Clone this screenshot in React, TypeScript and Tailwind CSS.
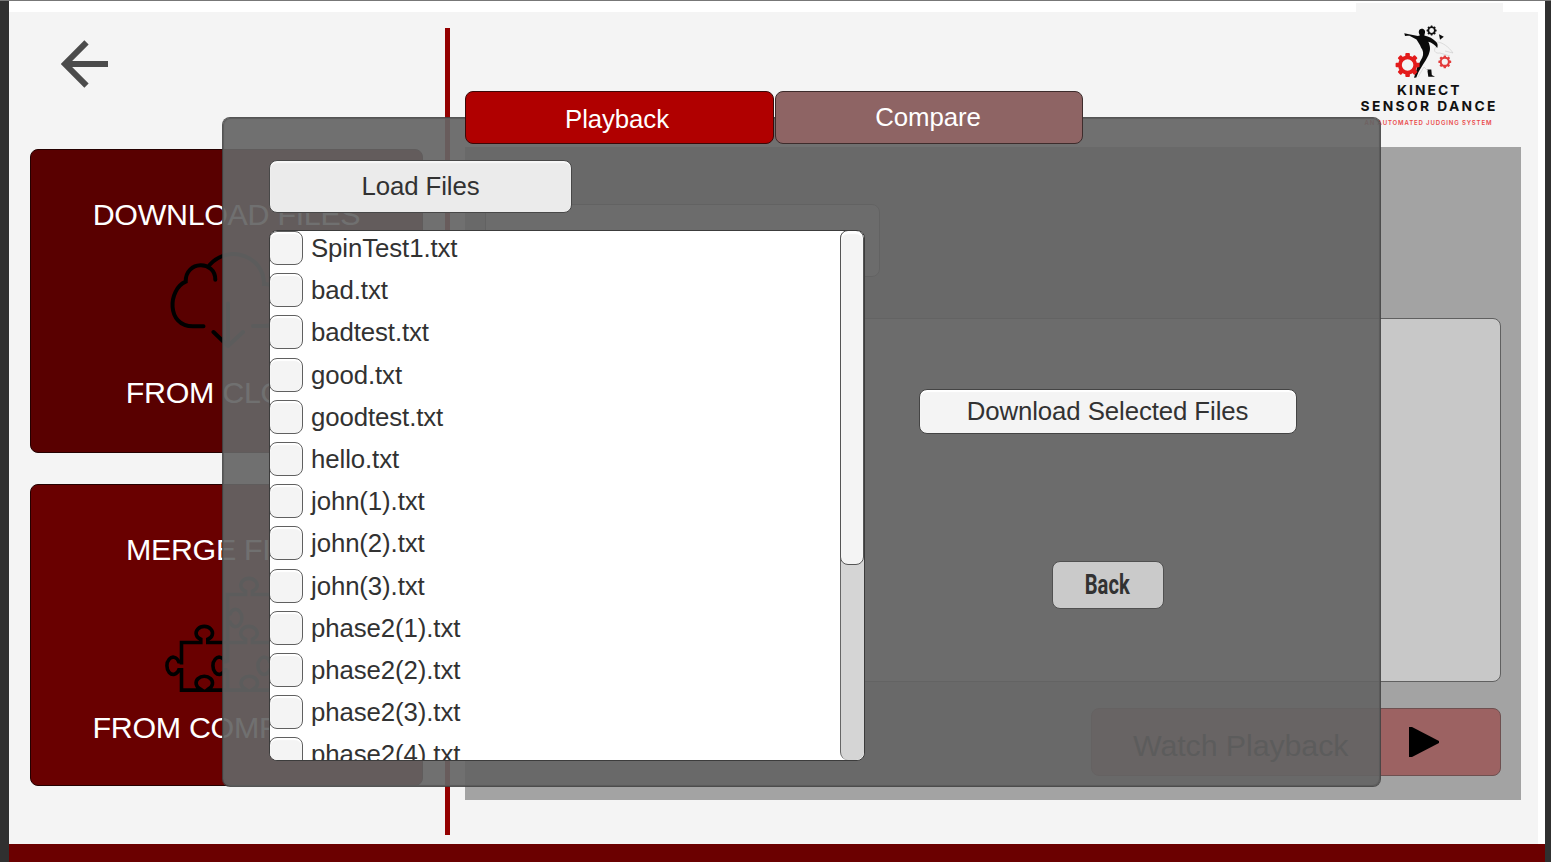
import React from "react";

const files = [
  "SpinTest1.txt",
  "bad.txt",
  "badtest.txt",
  "good.txt",
  "goodtest.txt",
  "hello.txt",
  "john(1).txt",
  "john(2).txt",
  "john(3).txt",
  "phase2(1).txt",
  "phase2(2).txt",
  "phase2(3).txt",
  "phase2(4).txt",
];

function Gear({ cx, cy, r, fill, teeth = 8 }: { cx: number; cy: number; r: number; fill: string; teeth?: number }) {
  const list = Array.from({ length: teeth }, (_, i) => (i * 360) / teeth);
  return (
    <g transform={`translate(${cx} ${cy})`} fill={fill}>
      <circle r={r * 0.64} fill="none" stroke={fill} strokeWidth={r * 0.32} />
      {list.map((a) => (
        <rect key={a} x={-r * 0.19} y={-r} width={r * 0.38} height={r * 0.36} rx={r * 0.08} transform={`rotate(${a})`} />
      ))}
    </g>
  );
}

function Logo() {
  return (
    <svg className="block h-[128px] w-[147px] bg-[#f4f4f4]" viewBox="1356 3 147 128">
      <path
        d="M1404.300 33.300L1409 34.200 1418 36 1420 35.200C1418 33 1418.500 29 1421.500 28.700 1424.500 28.500 1425.700 31 1424.800 33.500L1424.300 35.500C1429 36.500 1433 38.500 1436.300 42 1437.800 43.500 1438 45.500 1437.200 48 1435 44.800 1431.500 42.600 1428.300 41.800 1430.300 46 1430.800 50 1428.500 55 1427 58.500 1424.500 62 1423 64.500L1418.500 72 1416.300 77.500 1414 77.700 1417.500 66.500 1422.300 57.500C1423.800 54 1423.300 50.500 1421 47.500 1420 45 1418.500 42.500 1416.500 39.500L1409.500 35.700 1407.500 35.800 1405 36Z"
        fill="#0a0a0a"
      />
      <path d="M1427.300 69.500H1431.300L1431.800 75 1435 76.800H1428.300Z" fill="#0a0a0a" />
      <path d="M1439 34.200L1443.800 36.800 1440 39.800Z" fill="#0a0a0a" />
      <path d="M1436 47c-3 3-1 7 4 6l10 3M1437 42c5 0 12 5 16 11l-8-2M1418 77l6-10 4 4" fill="none" stroke="#c9c9c9" strokeWidth=".6" />
      <Gear cx={1431.600} cy={30.500} r={5} fill="#111111" />
      <Gear cx={1407.600} cy={65} r={12} fill="#e31b1b" />
      <Gear cx={1444.800} cy={61.800} r={6.400} fill="#e33c3c" />
      <g fontFamily="Inter, sans-serif">
        <text x="1397" y="94.500" fontSize="13.800" fontWeight="700" fill="#111" textLength="62.500">KINECT</text>
        <text x="1360.500" y="111.300" fontSize="13.800" fontWeight="700" fill="#111" textLength="135">SENSOR DANCE</text>
        <text x="1364.500" y="125" fontSize="6" fontWeight="600" fill="#ea4a4a" textLength="127">AN AUTOMATED JUDGING SYSTEM</text>
      </g>
    </svg>
  );
}

function CloudIcon() {
  return (
    <svg className="h-[100px] w-[116px]" viewBox="169 247.500 116 100" fill="none" stroke="#000" strokeWidth="4" strokeLinecap="round">
      <path d="M203.500 325.700H193c-27 0-25-37-7.300-44.500-.5-21.500 29.800-21.500 29.600-2" />
      <path d="M209.500 264.500c20-22 55-8 54.500 19 24 0 24 42 0 42h-11" />
      <path d="M228 303v42M213.500 331.500L228 345.500l15-14" />
    </svg>
  );
}

function PuzzleIcon() {
  return (
    <svg className="h-[118px] w-[130px]" viewBox="161.500 574.500 130 118" fill="none" stroke="#000" strokeWidth="3.600">
      <path d="M181 665V643H200.300V639.800A8.200 6.800 0 1 1 207.300 639.800V643H227" />
      <path d="M181 662.300H178.300A6.300 8.600 0 1 0 178.300 670.300H181V690.600H201.500L199.500 689.300A8.200 6.800 0 1 1 208.100 689.300L206.500 690.600H227V670.300" />
      <path d="M227 662.300H224.300A6.300 8.600 0 1 0 224.300 670.300H227" />
      <path d="M227 663V595H245V591.800A8.200 6.800 0 1 1 252 591.800V595H272V643H252V639.800A8.200 6.800 0 1 0 245 639.800V643H227" />
      <path d="M227 614.500H229.500A6.300 8.600 0 1 1 229.500 622.500H227M227 690.600H246.500L244.500 689.300A8.200 6.800 0 1 1 253.100 689.300L251 690.600H272V643M272 662.300H269.300A6.300 8.600 0 1 0 269.300 670.300H272" />
    </svg>
  );
}

function Sidebar() {
  const card = "flex flex-col items-center rounded-lg border text-[30.400px] tracking-[-0.3px] leading-[36px] text-white";
  return (
    <aside className="flex w-[393px] shrink-0 flex-col gap-[31px] pt-[137px]">
      <section className={`${card} h-[304px] border-[#250000] bg-[#590000] pt-[46px]`}>
        <h2>DOWNLOAD FILES</h2>
        <div className="mt-[16px] flex h-[100px] items-center">
          <CloudIcon />
        </div>
        <h2 className="mt-[26px]">FROM CLOUD</h2>
      </section>
      <section className={`${card} h-[302px] border-[#250000] bg-[#690000] pt-[46px]`}>
        <h2>MERGE FILES</h2>
        <div className="mt-[7px] flex h-[118px]">
          <PuzzleIcon />
        </div>
        <h2 className="mt-[17px]">FROM COMPUTER</h2>
      </section>
    </aside>
  );
}

function Tabs() {
  const tab = "h-[53px] rounded-lg border text-[25.800px] tracking-[-0.1px] text-white";
  return (
    <nav className="relative z-20 flex gap-px">
      <button className={`${tab} w-[309px] border-[#3b0808] bg-[#b00000] pt-[3px] pr-[5px]`}>Playback</button>
      <button className={`${tab} w-[308px] border-[#3d2c2c] bg-[#8e6464] pr-[2px]`}>Compare</button>
    </nav>
  );
}

function FileDialog() {
  return (
    <div
      role="dialog"
      className="absolute top-[116px] left-[222px] z-10 flex h-[670px] w-[1159px] rounded-lg border border-[#424242]/90 bg-[#646464]/92 bg-clip-padding pt-[42px] pl-[46px] text-[#323232] shadow-[inset_0_0_1px_1px_#5a5a5a]"
    >
      <div className="flex flex-col gap-[17px]">
        <button className="h-[53px] w-[303px] rounded-lg border border-[#484848] bg-[#ebebeb] text-[25.800px] tracking-[-0.1px] shadow-[inset_0_2px_1px_#f8f8f8]">
          Load Files
        </button>
        <div className="flex h-[531px] w-[596px] overflow-hidden rounded-lg border border-[#3c3c3c] bg-white">
          <ul className="-ml-px flex flex-1 flex-col gap-[8.200px] overflow-hidden">
            {files.map((name) => (
              <li key={name} className="flex h-[34px] shrink-0 items-center gap-2">
                <span className="h-[34px] w-[34px] rounded-lg border border-[#606060] bg-[#f4f4f4] shadow-[inset_0_2px_1px_#fff]" />
                <span className="text-[25.800px] leading-[34px] tracking-[-0.1px]">{name}</span>
              </li>
            ))}
          </ul>
          <div className="w-[24px] rounded-lg border-l border-[#666] bg-[#d5d5d5]">
            <div className="-mt-px -ml-px h-[335px] rounded-lg border border-[#555] bg-[#f4f4f4] shadow-[inset_0_3px_1px_#fff]" />
          </div>
        </div>
      </div>
      <div className="flex w-[485px] flex-col items-center pt-[229px]">
        <button className="h-[45px] w-[378px] rounded-lg border border-[#444] bg-[#f4f4f4] text-[25.800px] tracking-[-0.1px] shadow-[inset_0_2px_1px_#fff]">
          Download Selected Files
        </button>
        <button className="mt-[127px] h-[48px] w-[112px] rounded-lg border border-[#505050] bg-[#cacaca] font-[Roboto,sans-serif] text-[28px] font-bold">
          <span className="inline-block scale-x-[.72]">Back</span>
        </button>
      </div>
    </div>
  );
}

export default function App() {
  return (
    <div className="relative flex h-[862px] w-[1551px] flex-col overflow-hidden border-t border-[#777] bg-[#303030] pr-[6px] pl-[9px] font-['Liberation_Sans',Arial,sans-serif]">
      <div className="h-[11px] bg-white" />
      <div className="flex h-[832px] bg-white pr-[7px]">
        <main className="flex flex-1 bg-[#f4f4f4] pl-[21px]">
          <Sidebar />
          <div className="mt-[16px] ml-[22px] h-[807px] w-[5px] bg-[#930000]" />
          <section className="ml-[15px] flex w-[1056px] flex-col pt-[79px]">
            <Tabs />
            <div className="mt-[3px] flex h-[653px] flex-col bg-[#a3a3a3] pt-[57px] pr-[20px] pl-[20px]">
              <div className="h-[73px] w-[395px] rounded-lg border border-[#555] bg-[#c8c8c8]" />
              <div className="mt-[41px] h-[364px] rounded-lg border border-[#606060] bg-[#c8c8c8]" />
              <button className="mt-[26px] flex h-[68px] w-[410px] items-center self-end rounded-lg border border-[#6e5050] bg-[#9c6262] pl-[41px] text-[30.400px] tracking-[-0.1px] text-black">
                <span className="w-[276px] pt-[7px] text-left">Watch Playback</span>
                <svg className="h-[30px] w-[30px]" viewBox="0 0 30 30">
                  <path d="M0 0h3l27 14v2L3 30H0z" fill="#000" />
                </svg>
              </button>
            </div>
          </section>
        </main>
      </div>
      <footer className="h-[18px] shrink-0 bg-[#6b0000]" />
      <a href="#back" aria-label="Back" className="absolute top-[39px] left-[61px]">
        <svg className="block h-[48px] w-[47px]" viewBox="0 0 47 48" fill="none" stroke="#4b4b4b" strokeWidth="6">
          <path d="M25.500 2.300L4 24l21.500 21.700M7 24h40" />
        </svg>
      </a>
      <div className="absolute top-[2px] left-[1356px]">
        <Logo />
      </div>
      <FileDialog />
    </div>
  );
}
